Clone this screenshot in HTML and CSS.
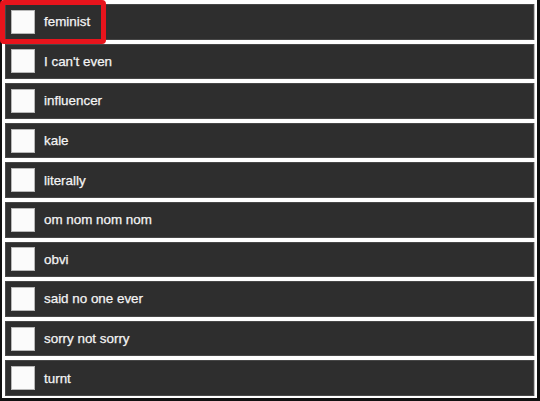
FILE: index.html
```html
<!DOCTYPE html>
<html>
<head>
<meta charset="utf-8">
<link rel="stylesheet" href="styles.css">
</head>
<body>
<div class="frame">
  <ul class="list">
    <li class="item"><span class="box"></span><span class="label">feminist</span></li>
    <li class="item"><span class="box"></span><span class="label">I can't even</span></li>
    <li class="item"><span class="box"></span><span class="label">influencer</span></li>
    <li class="item"><span class="box"></span><span class="label">kale</span></li>
    <li class="item"><span class="box"></span><span class="label">literally</span></li>
    <li class="item"><span class="box"></span><span class="label">om nom nom nom</span></li>
    <li class="item"><span class="box"></span><span class="label">obvi</span></li>
    <li class="item"><span class="box"></span><span class="label">said no one ever</span></li>
    <li class="item"><span class="box"></span><span class="label">sorry not sorry</span></li>
    <li class="item"><span class="box"></span><span class="label">turnt</span></li>
  </ul>
  <div class="highlight"></div>
</div>
</body>
</html>
```
FILE: styles.css
```css
html, body {
  margin: 0;
  padding: 0;
  background: #ffffff;
}
.frame {
  position: relative;
  box-sizing: border-box;
  width: 540px;
  height: 401px;
  border-left: 2px solid #111;
  border-right: 3px solid #111;
  border-bottom: 3px solid #111;
  padding: 4px 3px 2px 3px;
}
.list {
  list-style: none;
  margin: 0;
  padding: 0;
  display: flex;
  flex-direction: column;
  gap: 4px;
  height: 100%;
}
.item {
  box-sizing: border-box;
  flex: 1 1 0;
  display: flex;
  align-items: center;
  background: #2e2e2e;
  border: 1px solid #474747;
  box-shadow: 1px 0 0 #bdbdbd;
  padding-left: 5px;
}
.box {
  box-sizing: border-box;
  width: 24px;
  height: 24px;
  background: #fbfbfb;
  border: 1px solid #b8b8b8;
  flex: none;
}
.label {
  margin-left: 9px;
  color: #f4f4f4;
  font-family: "Liberation Sans", Arial, sans-serif;
  font-size: 13.4px;
  -webkit-text-stroke: 0.25px #f4f4f4;
}
.highlight {
  position: absolute;
  left: -2px;
  top: 0;
  width: 106px;
  height: 44px;
  box-sizing: border-box;
  border: 5px solid #e8141c;
  border-radius: 4px;
}
```
